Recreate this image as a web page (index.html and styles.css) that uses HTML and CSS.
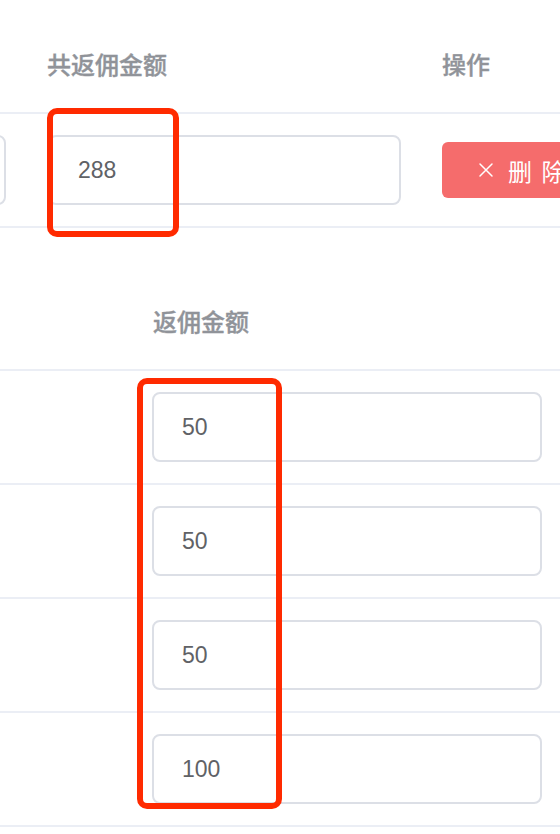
FILE: index.html
```html
<!DOCTYPE html>
<html lang="zh-CN">
<head>
<meta charset="utf-8">
<title>返佣</title>
<link rel="stylesheet" href="styles.css">
</head>
<body>
<div class="page">
  <div class="table t1">
    <div class="row head">
      <div class="cell c-a"></div>
      <div class="cell c-b">共返佣金额</div>
      <div class="cell c-c">操作</div>
    </div>
    <div class="row">
      <div class="cell c-a"><div class="input wide"></div></div>
      <div class="cell c-b"><div class="input">288</div></div>
      <div class="cell c-c">
        <button class="btn-danger" type="button">
          <svg class="ico" viewBox="0 0 16 16" width="16" height="16"><path d="M2 2 L14 14 M14 2 L2 14" stroke="#fff" stroke-width="1.5" fill="none" stroke-linecap="round"/></svg>
          <span class="btn-text">删 除</span>
        </button>
      </div>
    </div>
  </div>

  <div class="table t2">
    <div class="row head">
      <div class="cell c-a"></div>
      <div class="cell c-b">返佣金额</div>
    </div>
    <div class="row">
      <div class="cell c-a"></div>
      <div class="cell c-b"><div class="input">50</div></div>
    </div>
    <div class="row">
      <div class="cell c-a"></div>
      <div class="cell c-b"><div class="input">50</div></div>
    </div>
    <div class="row">
      <div class="cell c-a"></div>
      <div class="cell c-b"><div class="input">50</div></div>
    </div>
    <div class="row">
      <div class="cell c-a"></div>
      <div class="cell c-b"><div class="input">100</div></div>
    </div>
  </div>

  <div class="mark mark1"></div>
  <div class="mark mark2"></div>
</div>
</body>
</html>
```
FILE: styles.css
```css
html, body {
  margin: 0;
  padding: 0;
  background: #ffffff;
  overflow: hidden;
}

body {
  font-family: "Liberation Sans", "Noto Sans CJK SC", sans-serif;
}

.page {
  position: relative;
  width: 560px;
  height: 834px;
  padding-top: 19px;
  box-sizing: border-box;
  overflow: hidden;
}

.row {
  display: flex;
  align-items: center;
  height: 112px;
  border-bottom: 2px solid #ebeef5;
}

.row.head {
  height: 95px;
  box-sizing: border-box;
  padding-bottom: 4px;
  color: #909399;
  font-size: 24px;
  font-weight: 500;
  font-family: "Noto Sans CJK SC", sans-serif;
  -webkit-text-stroke: 0.35px #909399;
}

.cell {
  box-sizing: border-box;
  flex-shrink: 0;
  display: flex;
  align-items: center;
}

.t1 .c-a {
  width: 27px;
  padding-right: 21px;
  justify-content: flex-end;
}

.t1 .c-b {
  width: 395px;
  padding: 0 21px;
}

.row.head .c-b {
  padding-left: 20px;
}

.t1 .c-c {
  flex: 1;
  padding-left: 20px;
}

.t2 {
  margin-top: 48px;
}

.t2 .c-a {
  width: 132px;
}

.t2 .c-b {
  flex: 1;
  padding: 0 18px 0 20px;
}

.t2 .row.head .c-b {
  padding-left: 21px;
}

.input {
  box-sizing: border-box;
  width: 100%;
  height: 70px;
  border: 2px solid #dcdfe6;
  border-radius: 8px;
  padding: 0 28px;
  display: flex;
  align-items: center;
  font-size: 23px;
  color: #606266;
  background: #fff;
}

.input.wide {
  width: 200px;
  flex-shrink: 0;
}

.btn-danger {
  flex-shrink: 0;
  height: 56px;
  display: flex;
  align-items: center;
  gap: 14px;
  padding: 0 36px;
  border: none;
  border-radius: 6px;
  background: #f56c6c;
  color: #ffffff;
  font-family: "Noto Sans CJK SC", sans-serif;
  font-size: 24px;
  white-space: nowrap;
}

.ico {
  width: 16px;
  height: 16px;
}

.btn-text {
  word-spacing: 4px;
}

.mark {
  position: absolute;
  box-sizing: border-box;
  border: 6px solid #ff2a00;
  border-radius: 10px;
}

.mark1 {
  left: 47px;
  top: 108px;
  width: 132px;
  height: 129px;
}

.mark2 {
  left: 137px;
  top: 378px;
  width: 145px;
  height: 431px;
}
```
